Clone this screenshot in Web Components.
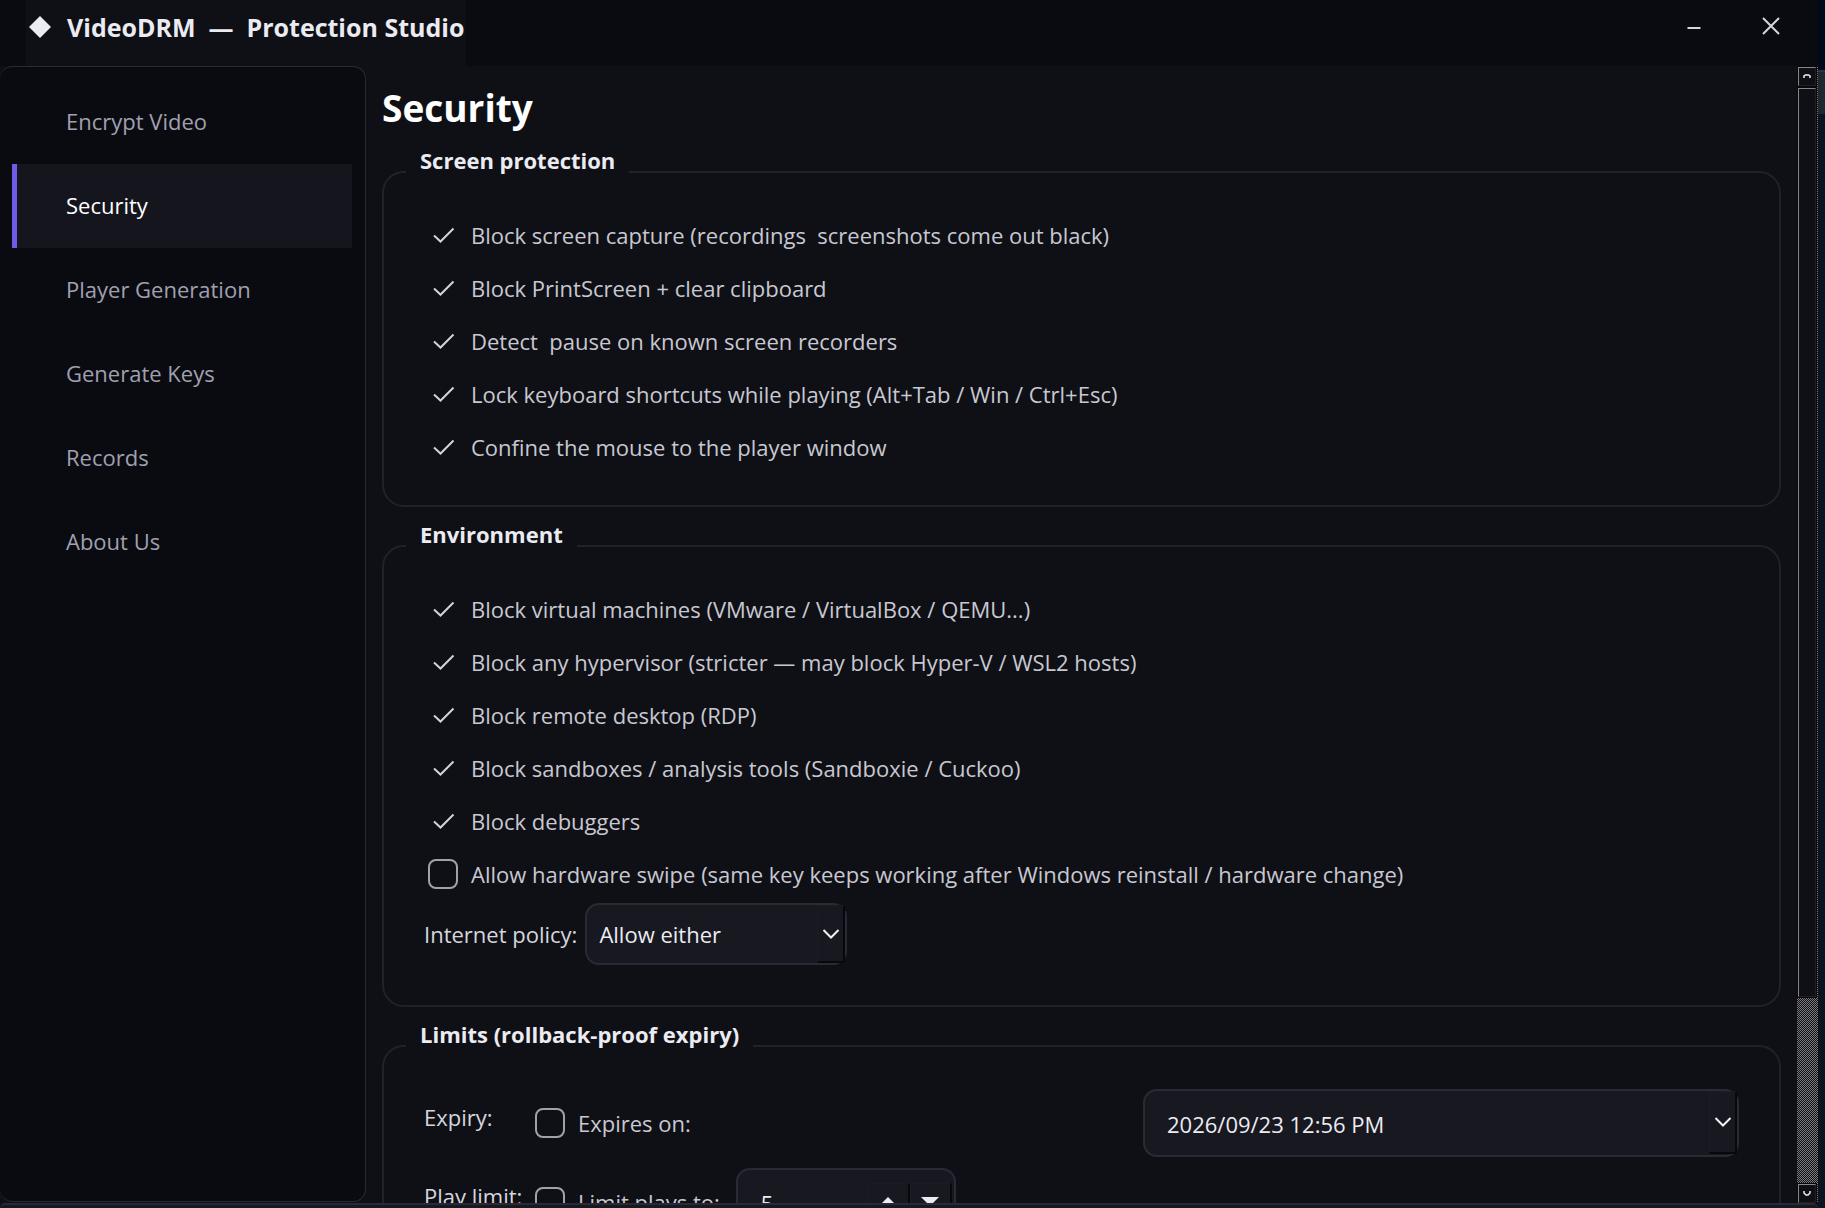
<!DOCTYPE html>
<html lang="en">
<head>
<meta charset="utf-8">
<title>VideoDRM — Protection Studio</title>
<style>
  :root {
    --bg: #0f1015;
    --bg-deep: #0a0b10;
    --surface: #181821;
    --line: #21212c;
    --line-strong: #2a2a37;
    --text: #c8c8d2;
    --text-bright: #ebebf2;
    --text-muted: #a0a0b0;
    --accent: #6c5ce7;
  }
  html, body { height: 100%; margin: 0; background: var(--bg); overflow: hidden; }
  body { font: 22px/30px "Open Sans", "Noto Sans", sans-serif; color: var(--text); }
</style>
</head>
<body>
<studio-app></studio-app>
<script>
const define = (name, html, setup) => {
  const template = document.createElement('template');
  template.innerHTML = '<style>*{box-sizing:border-box}button,input,select{font:inherit;color:inherit;margin:0}</style>' + html;
  customElements.define(name, class extends HTMLElement {
    connectedCallback() {
      if (this.shadowRoot) return;
      const root = this.attachShadow({ mode: 'open' });
      root.append(template.content.cloneNode(true));
      if (setup) setup(this, root);
    }
  });
};

/* Window caption with the product name and window buttons */
define('title-bar', `
<style>
  :host { display: flex; justify-content: space-between; height: 66px; box-sizing: border-box; flex: none; background: var(--bg-deep); padding: 0 9px 0 26px; color: var(--text-bright); }
  h1 { margin: 0; display: flex; align-items: flex-start; gap: 15px; background: var(--bg); padding: 12px 2px 0 2px; font-size: 25px; line-height: 30px; font-weight: 700; white-space: pre; }
  h1 svg { margin-top: 3px; }
  nav { display: flex; }
  button { width: 77px; height: 52px; border: 0; padding: 0; background: none; display: grid; place-items: center; }
</style>
<h1><svg width="24" height="24" viewBox="0 0 24 24" aria-hidden="true"><path d="M12 1 23 12 12 23 1 12z" fill="#ebebf2"/></svg><span><slot></slot></span></h1>
<nav>
  <button aria-label="Minimize"><svg width="18" height="18" viewBox="0 0 18 18"><path d="M2.500 11h13" stroke="#d5d5dc" stroke-width="2"/></svg></button>
  <button aria-label="Close"><svg width="18" height="18" viewBox="0 0 18 18"><path d="M1 1 17 17M17 1 1 17" stroke="#d5d5dc" stroke-width="2"/></svg></button>
</nav>`);

define('side-nav', `
<style>
  :host { display: block; box-sizing: border-box; flex: none; width: 366px; margin-bottom: 1px; padding: 13px 13px 13px 12px; background: var(--bg-deep); border: 1px solid var(--line-strong); border-left: 0; border-radius: 13px; }
  nav { display: flex; flex-direction: column; }
</style>
<nav><slot></slot></nav>`);

define('nav-item', `
<style>
  :host { display: block; color: var(--text-muted); }
  a { display: block; color: inherit; text-decoration: none; padding: 26px 0 28px 49px; border-left: 5px solid transparent; }
  :host([active]) { color: #fff; }
  :host([active]) a { background: #15151e; border-left-color: var(--accent); }
</style>
<a href="#"><slot></slot></a>`, (el, root) => {
  if (el.hasAttribute('active')) root.querySelector('a').setAttribute('aria-current', 'page');
});

define('settings-group', `
<style>
  :host { display: block; }
  fieldset { margin: 0; min-width: 0; border: 2px solid var(--line); border-radius: 22px; padding: 9px 40px 32px; }
  legend { margin-left: -18px; padding: 0 14px 24px; font-weight: 700; color: var(--text-bright); }
</style>
<fieldset><legend></legend><slot></slot></fieldset>`, (el, root) => {
  root.querySelector('legend').textContent = el.getAttribute('heading');
});

define('check-row', `
<style>
  :host { display: block; }
  label { display: flex; align-items: center; gap: 13px; height: 53px; padding-left: 4px; white-space: pre; }
  .box { display: grid; flex: none; }
  input, svg { grid-area: 1 / 1; width: 30px; height: 30px; }
  input { appearance: none; border: 2px solid #a2a2a6; border-radius: 8px; }
  input:checked { border-color: transparent; }
  svg { visibility: hidden; pointer-events: none; }
  input:checked + svg { visibility: visible; }
</style>
<label><span class="box"><input type="checkbox"><svg viewBox="0 0 30 30" fill="none" stroke="#d2d2da" stroke-width="2"><path d="M6 15.500 12.500 21.500 25.500 8.500"/></svg></span><span><slot></slot></span></label>`, (el, root) => {
  root.querySelector('input').checked = el.hasAttribute('checked');
});

const dropStyles = `
  .field { display: grid; }
  .field > * { grid-area: 1 / 1; }
  .control { appearance: none; width: 100%; background: var(--surface); color: var(--text-bright); border: 2px solid var(--line-strong); border-radius: 14px; outline: 0; }
  .drop { justify-self: end; align-self: stretch; width: 28px; margin: 2px 2px 2px 0; padding: 0; display: grid; place-items: center; pointer-events: none; background: var(--surface); border: 1px solid #1c1c26; border-right: 2px solid #08080c; border-bottom: 2px solid #08080c; }
`;
const chevron = '<svg width="18" height="12" viewBox="0 0 18 12" fill="none" stroke="#f0f0f5" stroke-width="2"><path d="M1.500 2 9 9.500 16.500 2"/></svg>';

define('option-picker', `
<style>${dropStyles}
  :host { display: flex; align-items: center; gap: 8px; padding: 3px 0 8px; color: #d6d6de; }
  .field { width: 262px; }
  .control { height: 62px; padding: 0 12px; }
</style>
<label for="choice"></label>
<span class="field"><select id="choice" class="control"><option>Allow either</option><option>Require online</option><option>Offline only</option></select><span class="drop">${chevron}</span></span>`, (el, root) => {
  root.querySelector('label').textContent = el.getAttribute('label');
});

define('date-field', `
<style>${dropStyles}
  :host { display: block; }
  .control { height: 68px; padding: 2px 22px 0; }
  .drop { pointer-events: auto; margin-bottom: 3px; }
</style>
<span class="field"><input class="control" type="text" aria-label="Expiry date" value="2026/09/23 12:56 PM"><button class="drop" aria-label="Open calendar">${chevron}</button></span>`);

define('number-field', `
<style>
  :host { display: flex; box-sizing: border-box; width: 220px; height: 68px; background: var(--surface); border: 2px solid var(--line-strong); border-radius: 14px; padding: 0 2px 0 0; color: var(--text-bright); }
  input { flex: 1; min-width: 0; appearance: none; background: none; border: 0; outline: 0; padding: 2px 0 0 23px; }
  button { width: 42px; height: 38px; margin-top: 13px; padding: 0; display: grid; place-items: center; background: var(--surface); border: 1px solid #1c1c26; border-right: 2px solid #08080c; border-bottom: 2px solid #08080c; }
</style>
<input type="text" inputmode="numeric" aria-label="Maximum plays" value="5">
<button aria-label="Increase"><svg width="18" height="9" viewBox="0 0 18 9"><path d="M9 0 18 9H0z" fill="#ebebf2"/></svg></button>
<button aria-label="Decrease"><svg width="18" height="9" viewBox="0 0 18 9"><path d="M0 0H18L9 9z" fill="#ebebf2"/></svg></button>`);

define('form-row', `
<style>
  :host { display: grid; grid-template-columns: 107px 1fr; color: #d6d6de; }
  .caption { padding-top: 13px; }
  .body { display: flex; align-items: center; gap: 16px; min-width: 0; color: var(--text); }
</style>
<span class="caption"></span><div class="body"><slot></slot></div>`, (el, root) => {
  root.querySelector('.caption').textContent = el.getAttribute('caption');
});

/* Classic bevelled scroll bar */
define('scroll-rail', `
<style>
  :host { display: flex; flex-direction: column; box-sizing: border-box; flex: none; width: 21px; padding-top: 1px; background: repeating-conic-gradient(#7c7c7c 0 25%, #101116 0 50%) 0 0 / 2px 2px; }
  button, .thumb { flex: none; background: var(--bg); border: 1px solid #85858a; border-right: 1px solid #241f1e; border-bottom: 1px solid #241f1e; box-shadow: 0 0 0 1px #08080b; margin: 0 2px 0 1px; padding: 0; }
  button { height: 19px; display: grid; place-items: center; }
  .thumb { flex: 908; margin-top: 2px; }
  .track { flex: 187; }
</style>
<button aria-label="Scroll up"><svg width="8" height="5" viewBox="0 0 8 5"><path d="M1 4V2L2.500 1H5.500L7 2V4" fill="none" stroke="#eee" stroke-width="1.500"/></svg></button>
<div class="thumb"></div><div class="track"></div>
<button aria-label="Scroll down"><svg width="8" height="5" viewBox="0 0 8 5"><path d="M1 0V2L3 4H5L7 2V0" fill="none" stroke="#eee" stroke-width="1.500"/></svg></button>`);

define('security-page', `
<style>
  :host { display: flex; flex-direction: column; box-sizing: border-box; flex: 1; min-width: 0; overflow: hidden; padding: 17px 16px 0; }
  h2 { margin: 0; flex: none; color: #fff; font-size: 37px; line-height: 50px; font-weight: 700; }
  .groups { display: flex; flex-direction: column; gap: 12px; padding-top: 12px; flex: none; }
  .limits { display: flex; flex-direction: column; gap: 11px; padding-top: 7px; }
  .half { flex: 1 1 0; min-width: 0; }
</style>
<h2>Security</h2>
<div class="groups">
  <settings-group heading="Screen protection">
    <check-row checked>Block screen capture (recordings  screenshots come out black)</check-row>
    <check-row checked>Block PrintScreen + clear clipboard</check-row>
    <check-row checked>Detect  pause on known screen recorders</check-row>
    <check-row checked>Lock keyboard shortcuts while playing (Alt+Tab / Win / Ctrl+Esc)</check-row>
    <check-row checked>Confine the mouse to the player window</check-row>
  </settings-group>
  <settings-group heading="Environment">
    <check-row checked>Block virtual machines (VMware / VirtualBox / QEMU...)</check-row>
    <check-row checked>Block any hypervisor (stricter — may block Hyper-V / WSL2 hosts)</check-row>
    <check-row checked>Block remote desktop (RDP)</check-row>
    <check-row checked>Block sandboxes / analysis tools (Sandboxie / Cuckoo)</check-row>
    <check-row checked>Block debuggers</check-row>
    <check-row>Allow hardware swipe (same key keeps working after Windows reinstall / hardware change)</check-row>
    <option-picker label="Internet policy:"></option-picker>
  </settings-group>
  <settings-group heading="Limits (rollback-proof expiry)">
    <div class="limits">
      <form-row caption="Expiry:"><check-row class="half">Expires on:</check-row><date-field class="half"></date-field></form-row>
      <form-row caption="Play limit:"><check-row>Limit plays to:</check-row><number-field></number-field></form-row>
    </div>
  </settings-group>
</div>`);

define('studio-app', `
<style>
  :host { display: grid; grid-template-columns: 1fr 7px; height: 100vh; }
  .window { display: flex; flex-direction: column; min-width: 0; min-height: 0; overflow: hidden; }
  .work { display: flex; flex: 1; min-height: 0; }
  footer { flex: none; height: 5px; background: var(--surface); border-top: 2px solid var(--line-strong); border-radius: 12px 12px 0 0; }
  .desktop { display: flex; flex-direction: column; background: #0b1420; }
  .desktop::before { content: ""; height: 70px; background: #000a1c; }
  .desktop::after { content: ""; height: 44px; background: #1f2831; border-top: 2px solid #2c353e; box-sizing: border-box; }
</style>
<div class="window">
  <title-bar>VideoDRM  —  Protection Studio</title-bar>
  <div class="work">
    <side-nav>
      <nav-item>Encrypt Video</nav-item>
      <nav-item active>Security</nav-item>
      <nav-item>Player Generation</nav-item>
      <nav-item>Generate Keys</nav-item>
      <nav-item>Records</nav-item>
      <nav-item>About Us</nav-item>
    </side-nav>
    <security-page></security-page>
    <scroll-rail></scroll-rail>
  </div>
  <footer></footer>
</div>
<div class="desktop"></div>`);
</script>
</body>
</html>
